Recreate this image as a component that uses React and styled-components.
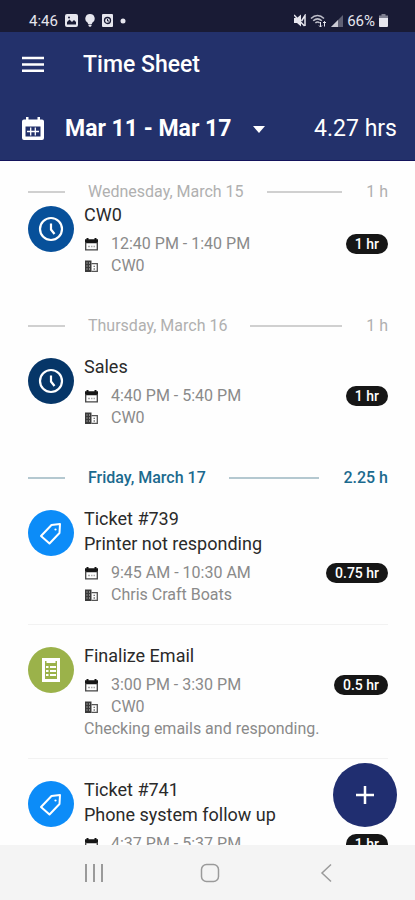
import React from 'react';
import styled, { createGlobalStyle } from 'styled-components';

const GlobalStyle = createGlobalStyle`
  * {
    box-sizing: border-box;
  }
  body {
    margin: 0;
    background: #fefefe;
    font-family: Roboto, "Liberation Sans", sans-serif;
  }
  button {
    border: 0;
    padding: 0;
    background: none;
    color: inherit;
    font: inherit;
    cursor: pointer;
  }
  svg {
    display: block;
    flex: none;
  }
`;

const Screen = styled.div`
  display: flex;
  flex-direction: column;
  height: 100vh;
`;

const StatusBar = styled.div`
  display: flex;
  flex: none;
  align-items: center;
  justify-content: space-between;
  height: 32px;
  padding: 9px 27px 0 29px;
  background: #191b35;
  color: #e6e6ee;
  font-size: 15px;
  line-height: 20px;
`;
const StatusGroup = styled.div`
  display: flex;
  align-items: center;
  gap: ${({ $gap }) => $gap}px;
`;

const AppBar = styled.header`
  flex: none;
  padding: 0 18px 0 21px;
  border-bottom: 1px solid #14145c;
  background: #23316b;
  color: #fff;
`;
const TitleRow = styled.div`
  display: flex;
  align-items: center;
  gap: 38px;
  height: 66px;
`;
const RangeRow = styled.div`
  display: flex;
  align-items: center;
  justify-content: space-between;
  height: 62px;
`;
const IconButton = styled.button`
  display: block;
`;
const PageTitle = styled.h1`
  margin: 0;
  font-size: 23px;
  font-weight: 500;
  line-height: 28px;
`;
const RangeButton = styled.button`
  display: flex;
  align-items: center;
`;
const RangeLabel = styled.span`
  margin: 0 22px 0 20px;
  font-size: 23px;
  font-weight: 700;
  line-height: 28px;
`;
const Total = styled.span`
  font-size: 23px;
  line-height: 28px;
`;

const Main = styled.main`
  position: relative;
  display: flex;
  flex: 1;
  min-height: 0;
`;
const DayList = styled.div`
  flex: 1;
  overflow-y: auto;
  padding: 0 27px 0 28px;
  scrollbar-width: none;
`;
const Day = styled.section`
  padding-top: 21px;
`;
const DayHeader = styled.div`
  display: flex;
  align-items: center;
  color: ${({ $active }) => ($active ? '#1b6a8e' : '#b0b0b0')};
  line-height: 20px;
`;
const Rule = styled.span`
  flex: ${({ $short }) => ($short ? '0 0 37px' : '1')};
  height: 2px;
  background: ${({ $active }) => ($active ? '#b4c8d0' : '#d0d0d0')};
`;
const DayName = styled.h2`
  margin: 0 23px;
  font-size: 16px;
  font-weight: ${({ $active }) => ($active ? 500 : 400)};
`;
const DayTotal = styled.span`
  margin-left: 24px;
  font-size: 16px;
  font-weight: ${({ $active }) => ($active ? 500 : 400)};
`;

const Entries = styled.ul`
  margin: 0;
  padding: 0;
  list-style: none;
`;
const EntryRow = styled.li`
  display: flex;
  gap: 10px;
  padding: ${({ $tight }) => ($tight ? 0 : 18)}px 0 18px;

  & + & {
    border-top: 1px solid #f2f2f2;
  }
`;
const Avatar = styled.div`
  display: flex;
  flex: none;
  align-items: center;
  justify-content: center;
  width: 46px;
  height: 46px;
  margin-top: 4px;
  border-radius: 50%;
  background: ${({ $color }) => $color};
`;
const EntryBody = styled.div`
  flex: 1;
  min-width: 0;
`;
const EntryTitle = styled.h3`
  margin: 0;
  color: #2a2a2a;
  font-size: 18px;
  font-weight: 400;
  line-height: 25px;
`;
const Meta = styled.div`
  display: grid;
  grid-template-columns: 27px 1fr auto;
  align-items: center;
  margin-top: ${({ $first }) => ($first ? 6 : 0)}px;
  color: #8a8a8a;
  font-size: 16px;
  line-height: 22px;
`;
const Note = styled.p`
  margin: 0;
  color: #8a8a8a;
  font-size: 16px;
  line-height: 22px;
`;
const Badge = styled.span`
  padding: 0 9px;
  border-radius: 10px;
  background: #161616;
  color: #fff;
  font-size: 14px;
  font-weight: 500;
  line-height: 20px;
`;

const AddButton = styled.button`
  position: absolute;
  right: 18px;
  bottom: 18px;
  display: flex;
  align-items: center;
  justify-content: center;
  width: 64px;
  height: 64px;
  border-radius: 50%;
  background: #202e70;
  color: #fff;
`;

const NavBar = styled.nav`
  display: flex;
  flex: none;
  justify-content: center;
  gap: 88px;
  height: 55px;
  padding-left: 4px;
  background: #f4f4f4;
  color: #9a9a9a;
`;

const ImageIcon = () => (
  <svg width="13" height="13" viewBox="0 0 13 13">
    <rect width="13" height="13" rx="2" fill="currentColor" />
    <path d="M2 10.500V8l2.500-2.500L7 8l2-2 2 2v2.500z" fill="#191b35" />
    <circle cx="4" cy="3.500" r="1" fill="#191b35" />
  </svg>
);
const BulbIcon = () => (
  <svg width="10" height="13" viewBox="0 0 10 13" fill="currentColor">
    <path d="M5 0a4.600 4.600 0 0 0-2.500 8.500L3.200 10h3.600l.7-1.500A4.600 4.600 0 0 0 5 0zM3.500 10.500h3V12L5 13l-1.500-1z" />
  </svg>
);
const AlarmIcon = () => (
  <svg width="11" height="13" viewBox="0 0 11 13">
    <rect width="11" height="13" rx="1" fill="currentColor" />
    <circle cx="5.500" cy="6.500" r="3" fill="none" stroke="#191b35" strokeWidth="1.300" />
    <path d="M5.500 5v2h1.500" fill="none" stroke="#191b35" />
  </svg>
);
const DotIcon = () => (
  <svg width="6" height="6" viewBox="0 0 6 6">
    <circle cx="3" cy="3" r="2.500" fill="currentColor" />
  </svg>
);
const MuteIcon = () => (
  <svg width="12" height="13" viewBox="0 0 12 13">
    <path d="M0 4h3l4-3.500v12L3 9H0z" fill="currentColor" />
    <path d="M0 1l10.500 11M7.500 7L11 1.500v10.500" fill="none" stroke="currentColor" strokeWidth="1.500" />
  </svg>
);
const WifiIcon = () => (
  <svg width="17" height="14" viewBox="0 0 17 14" fill="none" stroke="currentColor">
    <path d="M1 4.500c4-4 9-4 13 0M3.200 6.800c2.800-2.500 5.800-2.500 8.600 0M5.400 9c1.400-1.300 2.900-1.300 4.300 0" strokeWidth="1.500" opacity="0.800" />
    <path d="M10.500 8v5m-1.500-1.500l1.500 1.500 1.500-1.500M14.500 12.500v-5M13 9l1.500-1.500L16 9" />
  </svg>
);
const SignalIcon = () => (
  <svg width="12" height="12" viewBox="0 0 12 12" fill="currentColor">
    <path d="M0 12L12 0v12z" opacity="0.350" />
    <path d="M0 12L7 5v7z" opacity="0.800" />
  </svg>
);
const BatteryIcon = () => (
  <svg width="9" height="13" viewBox="0 0 9 13" fill="currentColor">
    <path d="M2.500 0h4v1.500H9V5H0V1.500h2.500z" opacity="0.500" />
    <path d="M0 4h9v8a1 1 0 0 1-1 1H1a1 1 0 0 1-1-1z" />
  </svg>
);

const MenuIcon = () => (
  <svg width="24" height="18" viewBox="0 0 24 18" fill="currentColor">
    <path d="M1 .8h22v2.500H1zM1 7.200h22v2.500H1zM1 13.600h22v2.500H1z" />
  </svg>
);
const CalendarIcon = () => (
  <svg width="24" height="24" viewBox="0 0 24 24">
    <path
      d="M5 0h2.500v2.500h9V0H19v2.500h2a2 2 0 0 1 2 2V21a2 2 0 0 1-2 2H3a2 2 0 0 1-2-2V4.500a2 2 0 0 1 2-2h2z"
      fill="currentColor"
    />
    <path d="M4.500 9.500h15v10h-15z" fill="#23316b" />
    <path d="M6 14.500h12M9.700 10.500v8M14.300 10.500v8" stroke="currentColor" strokeWidth="1.300" />
  </svg>
);
const CaretIcon = () => (
  <svg width="12" height="7" viewBox="0 0 12 7">
    <path d="M0 0h12L6 7z" fill="currentColor" />
  </svg>
);

const ClockIcon = () => (
  <svg width="26" height="26" viewBox="0 0 26 26" fill="none" stroke="#fff" strokeWidth="2.200">
    <circle cx="13" cy="13" r="11" />
    <path d="M13 7.500v6l3.500 4.500" />
  </svg>
);
const TagIcon = () => (
  <svg width="24" height="24" viewBox="0 0 24 24" fill="none" stroke="#fff" strokeWidth="2" strokeLinejoin="round">
    <path d="M2 15L12.500 4l8.500-1-.500 9L10.500 22.500z" />
    <circle cx="16.500" cy="8.500" r="1.100" fill="#fff" stroke="none" />
  </svg>
);
const TaskIcon = () => (
  <svg width="20" height="26" viewBox="0 0 20 26">
    <path d="M1 1h18v24H1z" fill="#fff" />
    <path d="M4 4h1.500v2h9V4H16v18H4z" fill="#9bb24a" />
    <path d="M5 10h2.500M9 10h6M5 14h2.500M9 14h6M5 18h2.500M9 18h6" stroke="#fff" strokeWidth="2" />
  </svg>
);
const DateIcon = () => (
  <svg width="15" height="15" viewBox="0 0 15 15">
    <path d="M2.500 1h2v1.200h6V1h2v1.200H14v4H1v-4h1.500z" fill="#161616" />
    <path d="M1.700 5v7.800h11.600V5" fill="none" stroke="#444" strokeWidth="1.300" />
    <path d="M4 9.500h2M7 9.500h1.500M9.500 9.500H11" stroke="#aaa" strokeWidth="1.500" />
  </svg>
);
const CompanyIcon = () => (
  <svg width="15" height="15" viewBox="0 0 15 15">
    <path d="M1 1.500h6.500V13H1z" fill="#3a3a3a" />
    <path d="M2.500 4h1M5 4h1M2.500 7h1M5 7h1M2.500 10h1M5 10h1" stroke="#d8d8d8" />
    <path d="M7.500 4.700h5.800v7.700H7.500" fill="none" stroke="#555" strokeWidth="1.300" />
    <path d="M9.500 7.300H11M9.500 10H11" stroke="#777" strokeWidth="1.300" />
  </svg>
);
const PlusIcon = () => (
  <svg width="20" height="20" viewBox="0 0 20 20" stroke="currentColor" strokeWidth="2.500">
    <path d="M1 10h18M10 1v18" />
  </svg>
);

const RecentsIcon = () => (
  <svg width="28" height="28" viewBox="0 0 28 28" stroke="currentColor" strokeWidth="2">
    <path d="M6 5v18M14 5v18M22 5v18" />
  </svg>
);
const HomeIcon = () => (
  <svg width="28" height="28" viewBox="0 0 28 28" fill="none" stroke="currentColor" strokeWidth="1.500">
    <rect x="5.500" y="5.500" width="17" height="17" rx="5" />
  </svg>
);
const BackIcon = () => (
  <svg width="28" height="28" viewBox="0 0 28 28" fill="none" stroke="currentColor" strokeWidth="1.500">
    <path d="M19 5.500L10 14l9 8.500" />
  </svg>
);

const icons = { clock: ClockIcon, tag: TagIcon, task: TaskIcon };

const days = [
  {
    name: 'Wednesday, March 15',
    total: '1 h',
    tight: true,
    entries: [
      { icon: 'clock', color: '#07509a', titles: ['CW0'], time: '12:40 PM - 1:40 PM', hours: '1 hr', company: 'CW0' },
    ],
  },
  {
    name: 'Thursday, March 16',
    total: '1 h',
    entries: [
      { icon: 'clock', color: '#063668', titles: ['Sales'], time: '4:40 PM - 5:40 PM', hours: '1 hr', company: 'CW0' },
    ],
  },
  {
    name: 'Friday, March 17',
    total: '2.25 h',
    active: true,
    entries: [
      {
        icon: 'tag',
        color: '#0c8cf8',
        titles: ['Ticket #739', 'Printer not responding'],
        time: '9:45 AM - 10:30 AM',
        hours: '0.75 hr',
        company: 'Chris Craft Boats',
      },
      {
        icon: 'task',
        color: '#9bb24a',
        titles: ['Finalize Email'],
        time: '3:00 PM - 3:30 PM',
        hours: '0.5 hr',
        company: 'CW0',
        note: 'Checking emails and responding.',
      },
      {
        icon: 'tag',
        color: '#0c8cf8',
        titles: ['Ticket #741', 'Phone system follow up'],
        time: '4:37 PM - 5:37 PM',
        hours: '1 hr',
        company: 'CW0',
      },
    ],
  },
];

const Entry = ({ entry, tight }) => {
  const Icon = icons[entry.icon];
  return (
    <EntryRow $tight={tight}>
      <Avatar $color={entry.color}>
        <Icon />
      </Avatar>
      <EntryBody>
        {entry.titles.map(title => (
          <EntryTitle key={title}>{title}</EntryTitle>
        ))}
        <Meta $first>
          <DateIcon />
          <span>{entry.time}</span>
          <Badge>{entry.hours}</Badge>
        </Meta>
        <Meta>
          <CompanyIcon />
          <span>{entry.company}</span>
        </Meta>
        {entry.note && <Note>{entry.note}</Note>}
      </EntryBody>
    </EntryRow>
  );
};

const App = () => (
  <>
    <GlobalStyle />
    <Screen>
      <StatusBar>
        <StatusGroup $gap={7}>
          <span>4:46</span>
          <ImageIcon />
          <BulbIcon />
          <AlarmIcon />
          <DotIcon />
        </StatusGroup>
        <StatusGroup $gap={4}>
          <MuteIcon />
          <WifiIcon />
          <SignalIcon />
          <span>66%</span>
          <BatteryIcon />
        </StatusGroup>
      </StatusBar>

      <AppBar>
        <TitleRow>
          <IconButton aria-label="Open menu">
            <MenuIcon />
          </IconButton>
          <PageTitle>Time Sheet</PageTitle>
        </TitleRow>
        <RangeRow>
          <RangeButton>
            <CalendarIcon />
            <RangeLabel>Mar 11 - Mar 17</RangeLabel>
            <CaretIcon />
          </RangeButton>
          <Total>4.27 hrs</Total>
        </RangeRow>
      </AppBar>

      <Main>
        <DayList>
          {days.map(day => (
            <Day key={day.name}>
              <DayHeader $active={day.active}>
                <Rule $short $active={day.active} />
                <DayName $active={day.active}>{day.name}</DayName>
                <Rule $active={day.active} />
                <DayTotal $active={day.active}>{day.total}</DayTotal>
              </DayHeader>
              <Entries>
                {day.entries.map(entry => (
                  <Entry key={entry.time} entry={entry} tight={day.tight} />
                ))}
              </Entries>
            </Day>
          ))}
        </DayList>
        <AddButton aria-label="Add time entry">
          <PlusIcon />
        </AddButton>
      </Main>

      <NavBar>
        <IconButton aria-label="Recent apps">
          <RecentsIcon />
        </IconButton>
        <IconButton aria-label="Home">
          <HomeIcon />
        </IconButton>
        <IconButton aria-label="Back">
          <BackIcon />
        </IconButton>
      </NavBar>
    </Screen>
  </>
);

export default App;
